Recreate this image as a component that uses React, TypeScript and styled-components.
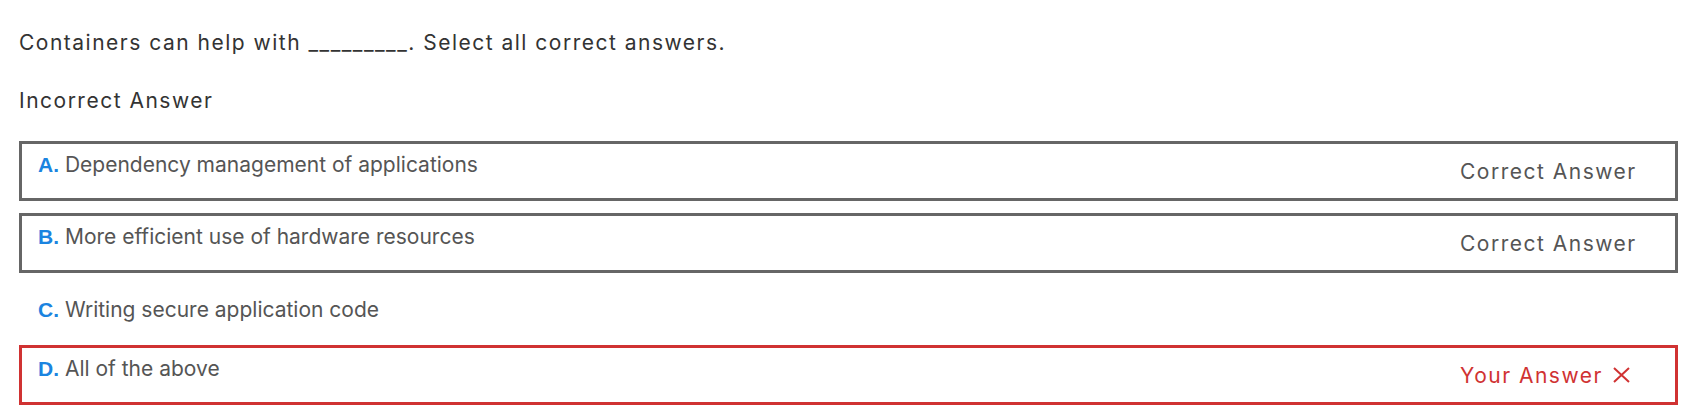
import styled, { createGlobalStyle } from "styled-components";

const GlobalStyle = createGlobalStyle`
  body {
    margin: 0;
    background: #ffffff;
    font-family: "Inter", "Liberation Sans", sans-serif;
  }
`;

const Page = styled.div`
  padding: 30px 9px 0 19px;
`;

const Question = styled.p`
  margin: 0;
  font-size: 21px;
  line-height: 25px;
  letter-spacing: 1.5px;
  color: #333333;
`;

const Verdict = styled.p`
  margin: 33px 0 0 0;
  font-size: 21px;
  line-height: 25px;
  letter-spacing: 1.5px;
  color: #333333;
`;

const OptionList = styled.div`
  display: flex;
  flex-direction: column;
  gap: 12px;
  margin-top: 28px;
`;

type OptionState = "correct" | "wrong" | "none";

const Option = styled.div<{ $state: OptionState }>`
  box-sizing: border-box;
  display: flex;
  justify-content: space-between;
  align-items: ${(p) => (p.$state === "none" ? "center" : "flex-start")};
  min-height: ${(p) => (p.$state === "none" ? "48px" : "60px")};
  padding: ${(p) => (p.$state === "none" ? "0 16px 0 19px" : "8px 35px 0 16px")};
  border: ${(p) =>
    p.$state === "wrong"
      ? "3px solid #d03232"
      : p.$state === "correct"
      ? "3px solid #666666"
      : "none"};
`;

const OptionText = styled.div`
  font-size: 21px;
  line-height: 25px;
  color: #555555;
`;

const Letter = styled.span`
  font-family: "Liberation Sans", Arial, sans-serif;
  font-weight: 700;
  color: #1b84e0;
`;

const Status = styled.div<{ $wrong?: boolean }>`
  display: flex;
  align-items: center;
  align-self: center;
  gap: 10px;
  width: 180px;
  margin-top: -8px;
  font-size: 21px;
  line-height: 25px;
  letter-spacing: 1.5px;
  color: ${(p) => (p.$wrong ? "#d03232" : "#555555")};
`;

const Cross = () => (
  <svg width="17" height="16" viewBox="0 0 17 16">
    <path d="M1 1 L16 15 M16 1 L1 15" stroke="#d03232" strokeWidth="2" fill="none" />
  </svg>
);

const options: { letter: string; text: string; state: OptionState }[] = [
  { letter: "A.", text: "Dependency management of applications", state: "correct" },
  { letter: "B.", text: "More efficient use of hardware resources", state: "correct" },
  { letter: "C.", text: "Writing secure application code", state: "none" },
  { letter: "D.", text: "All of the above", state: "wrong" },
];

export default function App() {
  return (
    <Page>
      <GlobalStyle />
      <Question>Containers can help with _________. Select all correct answers.</Question>
      <Verdict>Incorrect Answer</Verdict>
      <OptionList>
        {options.map((o) => (
          <Option key={o.letter} $state={o.state}>
            <OptionText>
              <Letter>{o.letter}</Letter> {o.text}
            </OptionText>
            {o.state === "correct" && <Status>Correct Answer</Status>}
            {o.state === "wrong" && (
              <Status $wrong>
                Your Answer <Cross />
              </Status>
            )}
          </Option>
        ))}
      </OptionList>
    </Page>
  );
}
